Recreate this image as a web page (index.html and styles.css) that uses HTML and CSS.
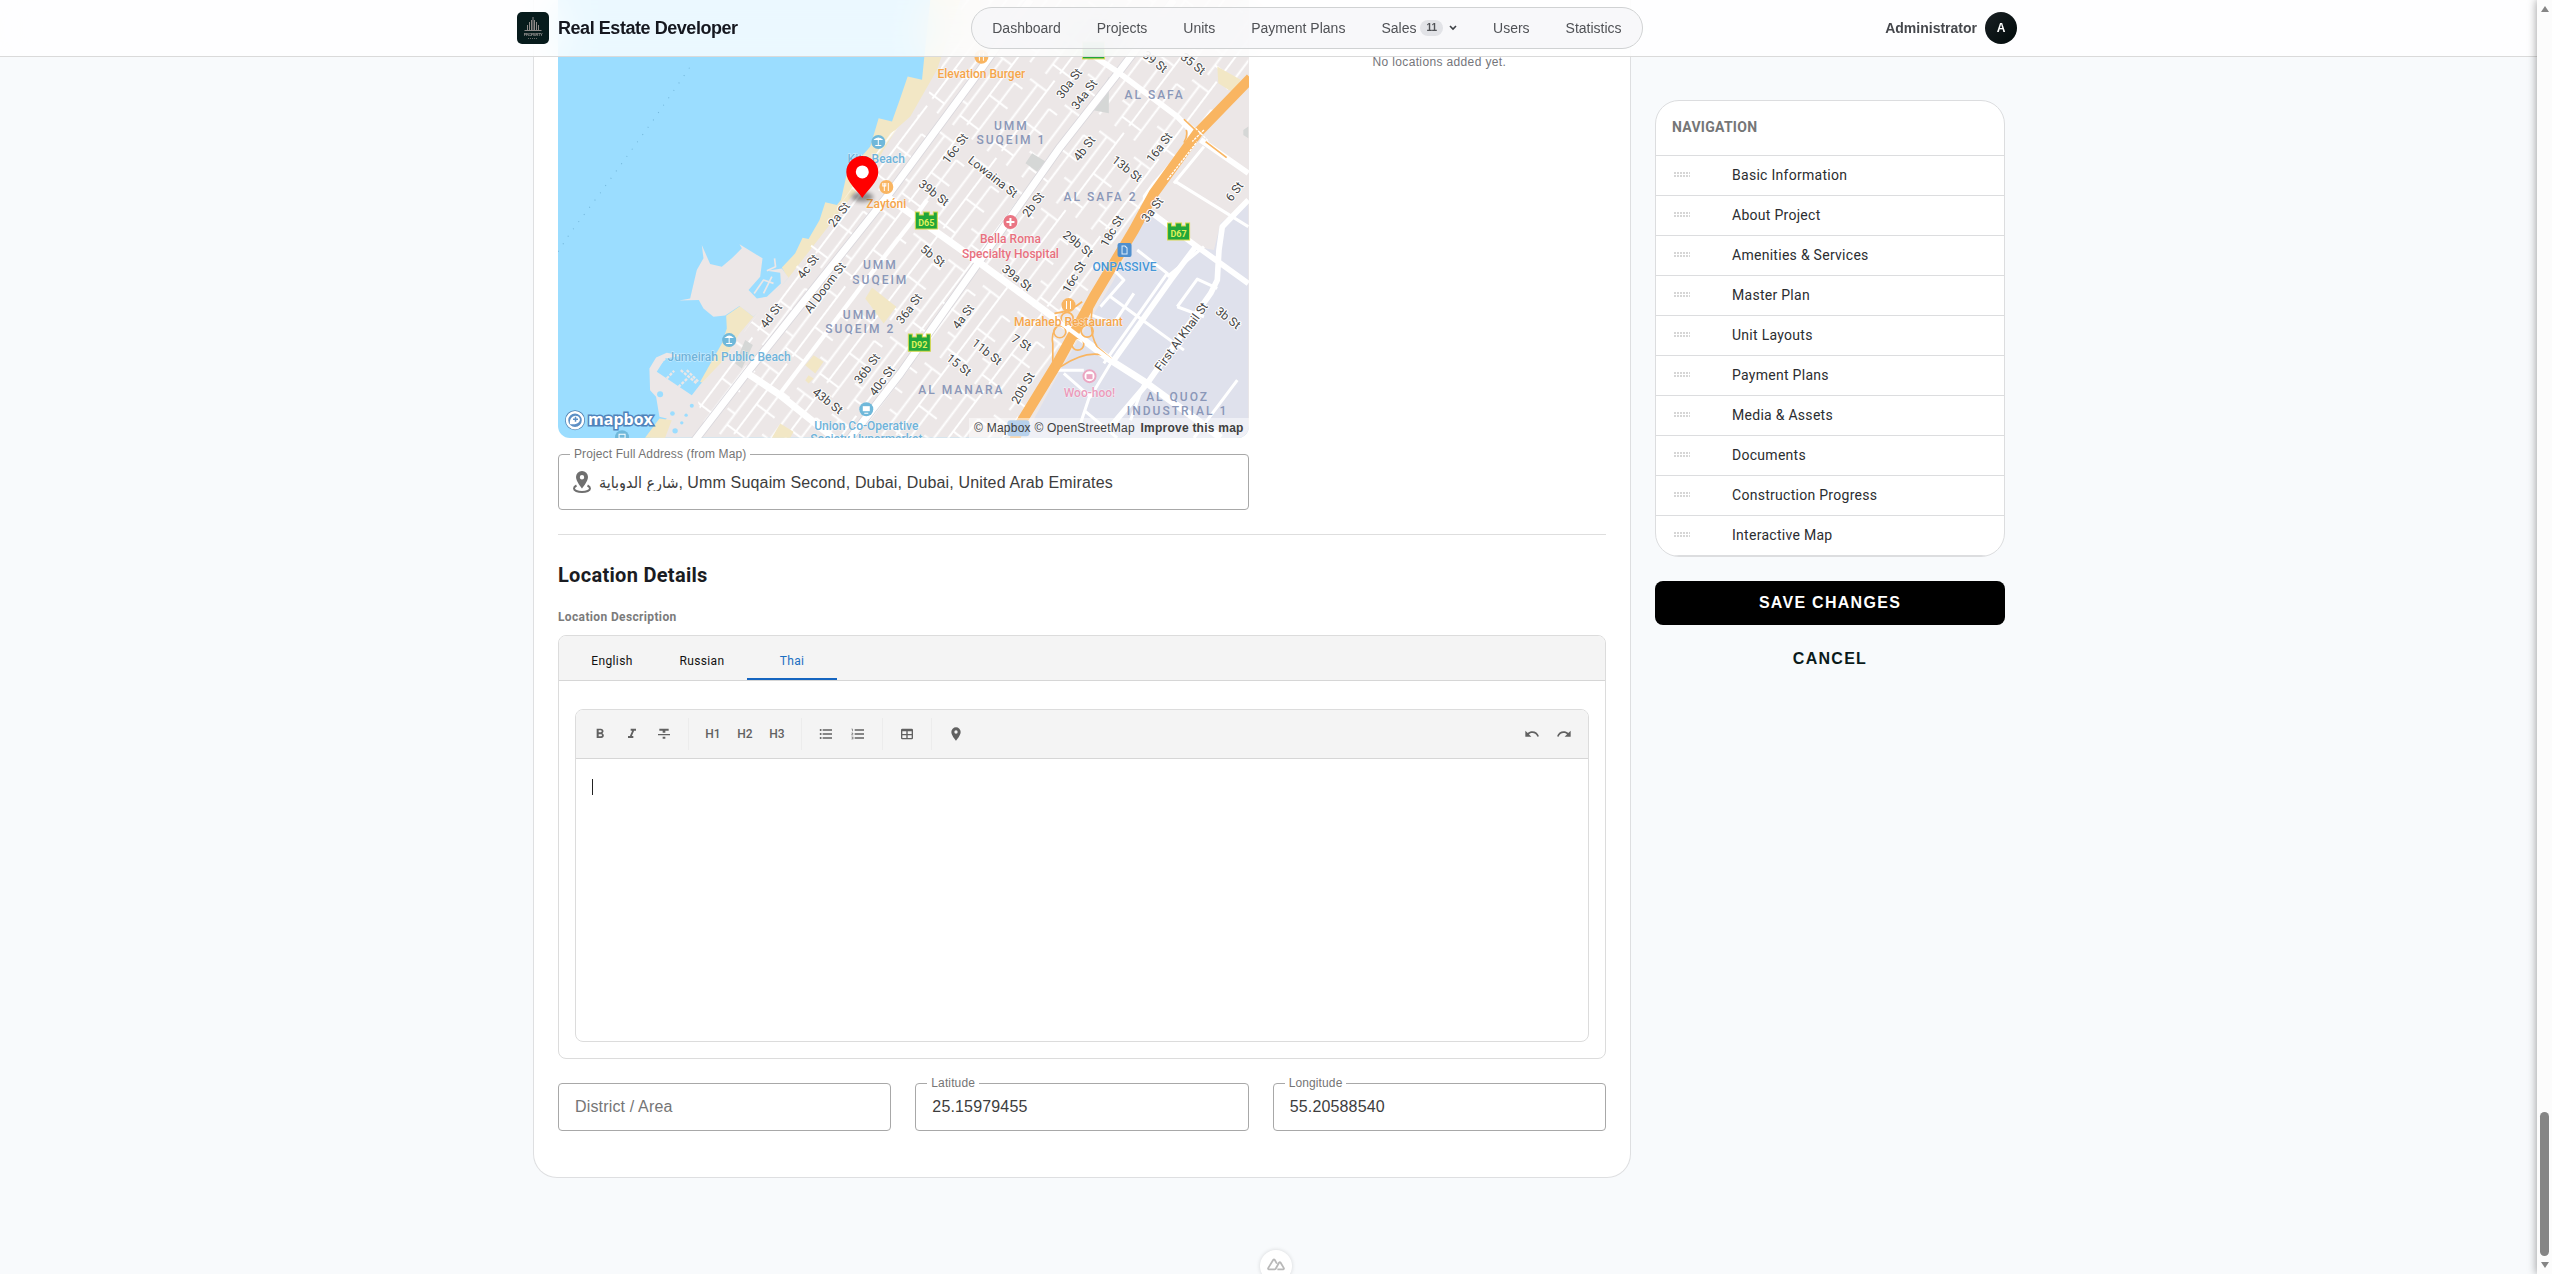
FILE: index.html
```html
<!DOCTYPE html>
<html lang="en">
<head>
<meta charset="utf-8">
<meta name="viewport" content="width=device-width, initial-scale=1">
<title>Real Estate Developer</title>
<link rel="stylesheet" href="styles.css">
</head>
<body>
<header class="topbar">
  <div class="topbar-inner">
    <a class="brand" href="#">
      <svg class="brand-logo" viewBox="0 0 32 32" aria-hidden="true">
        <rect width="32" height="32" rx="5" fill="#071b1c"/>
        <g stroke="#8d8988" fill="none"><path d="M16 5v13M14.500 8v10M17.500 8v10M12.500 10v8M19.500 10v8M10.500 13v5M21.500 13v5" stroke-width="1"/><path d="M7.500 18.500h17"/></g>
        <text x="16" y="24" font-size="4" text-anchor="middle" fill="#9b9796" class="logo-text">PROPERTY</text>
        <path d="M11 26.500h10" stroke="#6c6a6a" stroke-dasharray="1 1"/>
      </svg>
      <span>Real Estate Developer</span>
    </a>
    <nav class="pill" aria-label="Main">
      <a href="#">Dashboard</a>
      <a href="#">Projects</a>
      <a href="#">Units</a>
      <a href="#">Payment Plans</a>
      <a href="#">Sales <span class="badge">11</span><svg class="chevron" viewBox="0 0 8 6" aria-hidden="true"><path d="M1 1l3 3 3-3" fill="none" stroke="#3c3f44" stroke-width="1.600"/></svg></a>
      <a href="#">Users</a>
      <a href="#">Statistics</a>
    </nav>
    <button class="account" type="button"><span>Administrator</span><span class="avatar">A</span></button>
  </div>
</header>

<main class="page">
  <section class="card">
    <div class="grid">
      <div class="map-col">
        <div class="map">
          <svg class="map-art" viewBox="0 0 690 438" preserveAspectRatio="xMidYMid slice" role="img" aria-label="Map of Umm Suqeim, Dubai">
            <defs>
              <pattern id="blocks" width="290" height="130" patternUnits="userSpaceOnUse" patternTransform="translate(1010 440) rotate(-53)">
                <path d="M0 28H250M26 62H290M0 100H212M36 28V100M250 0V62M138 62V130M212 100V130M76 0V28" fill="none" stroke="#fff" stroke-width="6"/>
              </pattern>
              <filter id="soft" x="-50%" y="-50%" width="200%" height="200%"><feGaussianBlur stdDeviation="2"/></filter>
            </defs>
            <rect width="690" height="438" fill="#9bddff"/>
            <g transform="translate(-8 50) scale(.33333)" stroke-linejoin="round">
              <path fill="#f2e7c5" d="M1140-150 1122 20 1115 90 1072 80 1048 150 1025 215 985 205 960 290 890 370 872 450 860 465 825 457 808 510 775 567 757 563 735 610 695 652 715 690 610 800 570 768 528 797 530 835 515 880 450 995 480 1010 800 640 1300 0 1400-150z"/>
              <path fill="#ece7e7" d="M1230-150 1160 60 1080 200 1040 235 1000 300 940 400 900 445 715 683 640 760 610 800 568 850 520 930 450 1003 425 1035 320 965 345 925 395 917 350 908 318 922 298 955 300 1020 318 1040 328 1100 350 1105 300 1163H2100V-150z"/>
              <path fill="#ece7e7" d="M455 585 460 625 440 660 420 745 387 751 446 750 460 775 490 800 525 796 568 768 610 800 715 683 695 655 650 662 690 668 692 700 650 740 620 745 595 720 630 680 637 625 568 583 575 595 545 625 515 650 480 642z"/>
              <path d="M673 625 676 650 650 662M612 730 640 690 670 700M640 730 665 680" fill="none" stroke="#ece7e7" stroke-width="5"/>
              <path d="M320 950 345 925M350 985 372 962M385 1010 412 985M392 960 440 1000M410 960 445 995" fill="none" stroke="#ece7e7" stroke-width="7" stroke-dasharray="9 4"/>
              <path d="M24 605 60 550 150 430 310 210 400 80 430 36" stroke="#72b5d9" stroke-width="3" stroke-dasharray="3 24" fill="none"/>
              <path fill="url(#blocks)" d="M1230-150 1170 60 1100 200 1020 250 715 683 600 820 440 1040 470 1163H1400L1540 940 1700 640 1800 440 1950 250 2093 90V-150z"/>
              <path fill="#f2e7c5" d="M328 1105 365 1110 345 1163H285zM965 712 1038 770 1000 820 945 745zM790 915 820 935 795 970 765 945zM690 1120 730 1145 720 1163H665zM775 975 790 985 775 1000 765 990zM2000 50 2070 90 2050 130 2003 100z"/>
              <path fill="#ece7e7" d="M1815 430 1960 290 2093 380V500L1990 600 1940 590z"/>
              <path fill="#dfe1ec" d="M1795 480 1940 590 1990 600 2010 520 2093 450V1163H1420L1530 960 1690 690z"/>
              <path fill="none" stroke="#fff" stroke-width="9" d="M1680 740 1790 820 1900 900M1760 600 1850 670 1660 940M1680 650 1720 690 1650 770M1870 400 1960 290M1875 395 2093 530M1850 680 1960 590M1750 730 1690 820 1610 790M1770 820 1700 910M1600 960 1520 960M1540 970 1620 1040 1680 940M1600 1080 1700 1163M1620 1030 1590 1120M1740 1110 1780 1000M2060 990 1930 1163M1880 770 1940 687 2000 715M1880 770 1960 800"/>
              <path fill="#d5d7d6" d="M1675 80V190L1625 180zM1445 310 1485 335 1460 365 1425 340zM585 870 608 885 575 955 555 940zM2078 240 2093 230V265L2078 255z"/>
              <g fill="#9bddff"><circle cx="330" cy="1032" r="9"/><circle cx="367" cy="1090" r="7"/><circle cx="395" cy="1118" r="5"/><circle cx="375" cy="1142" r="8"/><circle cx="425" cy="1067" r="6"/><circle cx="408" cy="1095" r="5"/></g>
              <path fill="none" stroke="#d9d7dc" stroke-width="26" d="M430 1176 590 968 1010 440 1290 60 1440-150M890 1176 1050 970 1290 630 1530 290 1710 60 1870-150"/>
              <g fill="none" stroke="#fff">
                <path stroke-width="21" d="M430 1176 590 968 1010 440 1290 60 1440-150M890 1176 1050 970 1290 630 1530 290 1710 60 1870-150M590 968 690 1035 850 1163M1010 440 1080 490 1290 640 1480 780 1680 930 1790 1000 1940 1110 2010 1163"/>
                <path stroke-width="17" d="M1540-40 1700 65 1880 200 1920 240 1920 280 1815 400 1785 440 1792 480 1940 590 2093 700M1950 270 2093 370M2093 450 2015 530 2005 600 2000 690 1980 730 1790 1000 1680 1130M1935 590 1860 690 1690 930"/>
                <path stroke-width="13" d="M690 1030 940 700 1080 520 1130 450"/>
              </g>
              <g fill="none" stroke="#f9b561">
                <path d="M2100 85 1940 250 1810 430 1750 540 1630 740 1520 940 1410 1120 1390 1176" stroke-width="31"/>
                <path stroke-width="5" d="M1900 208 1950 255M1965 275 2028 323M1907 240Q1912 260 1900 278M1507 970V880Q1500 845 1528 820M1512 790Q1560 785 1595 755M1625 775Q1615 850 1640 890L1680 925Q1620 890 1530 950"/>
                <circle cx="1528" cy="845" r="18" stroke-width="5"/><circle cx="1610" cy="843" r="18" stroke-width="5"/><circle cx="1582" cy="882" r="18" stroke-width="5"/><circle cx="1550" cy="805" r="18" stroke-width="5"/>
              </g>
              <path d="M1480 780 1680 930" stroke="#fff" stroke-width="13"/>
              <path d="M1850 390 1940 275M1935 235 1975 275M1960 240 1925 275" stroke="#fff" stroke-width="4" stroke-dasharray="8 3"/>
            </g>

            <g class="m-poi">
              <g fill="#6fb8da"><circle cx="320" cy="142" r="7"/><circle cx="171" cy="340" r="7"/><circle cx="308" cy="409" r="7"/><circle cx="64" cy="437" r="7"/></g>
              <g fill="#f9b561"><circle cx="328" cy="187" r="7"/><circle cx="423" cy="57" r="7"/><circle cx="510" cy="305" r="7"/></g>
              <circle cx="452" cy="222" r="7" fill="#ea7583"/><path d="M452 218v8M448 222h8" stroke="#fff" stroke-width="2"/>
              <circle cx="531" cy="376" r="6" fill="#fff" stroke="#eba6c2" stroke-width="2"/><rect x="528" y="374" width="6" height="5" fill="#eba6c2"/>
              <rect x="559" y="243" width="14" height="14" rx="2" fill="#4f8fce"/><path d="M563.500 254v-8h3l2 2v6z" fill="none" stroke="#dcecf9"/>
              <path d="M316.500 139.500q3.500-3 7 0zM320 139v6M317 145.500h6M167.500 337.500q3.500-3 7 0zM171 337v6M168 343.500h6" stroke="#fff" fill="#fff"/>
              <rect x="304.500" y="406" width="7" height="5" fill="#fff"/><path d="M306 413h4M61 434h6v4h-6z" stroke="#fff" fill="none"/>
              <path d="M326 183v8M330 183v8M324.500 183v3h3v-3M421 53v8M425 53v8M508 301v8M512 301v8" stroke="#fff" fill="none"/>
              <rect x="449" y="420" width="22" height="16" rx="3" fill="#6fa3d8"/>
            </g>

            <g class="m-shield">
              <g fill="#21a63b" stroke="#d7d84c"><path d="M357 212h4v3h4v-3h6v3h4v-3h4v17h-22zM609 223h4v3h4v-3h6v3h4v-3h4v17h-22zM350 334h4v3h4v-3h6v3h4v-3h4v17h-22z"/><rect x="524" y="42" width="22" height="17"/></g>
              <text x="368" y="226">D65</text><text x="620" y="237">D67</text><text x="361" y="348">D92</text>
            </g>

            <g class="m-area">
              <text x="453" y="130">UMM</text><text x="453" y="144">SUQEIM 1</text>
              <text x="596" y="99">AL SAFA</text><text x="542" y="201">AL SAFA 2</text>
              <text x="322" y="269">UMM</text><text x="322" y="284">SUQEIM</text>
              <text x="302" y="319">UMM</text><text x="302" y="333">SUQEIM 2</text>
              <text x="403" y="394">AL MANARA</text><text x="619" y="401">AL QUOZ</text><text x="619" y="415">INDUSTRIAL 1</text>
            </g>
            <g class="m-label">
              <g fill="#6fb3da"><text x="318" y="163">Kite Beach</text><text x="171" y="361">Jumeirah Public Beach</text><text x="308" y="430">Union Co-Operative</text><text x="308" y="443">Society Hypermarket</text></g>
              <g fill="#f5a54a"><text x="328" y="208">Zaytóni</text><text x="423" y="78">Elevation Burger</text><text x="510" y="326">Maraheb Restaurant</text></g>
              <g fill="#e8707e"><text x="452" y="243">Bella Roma</text><text x="452" y="258">Specialty Hospital</text></g>
              <text x="566" y="271" fill="#4797d8">ONPASSIVE</text><text x="531" y="397" fill="#eb9bbb">Woo-hoo!</text>
            </g>
            <g class="m-street">
              <text transform="translate(284 217) rotate(-53)">2a St</text>
              <text transform="translate(253 269) rotate(-53)">4c St</text>
              <text transform="translate(270 290) rotate(-53)">Al Doom St</text>
              <text transform="translate(216 318) rotate(-53)">4d St</text>
              <text transform="translate(312 371) rotate(-53)">36b St</text>
              <text transform="translate(327 383) rotate(-53)">40c St</text>
              <text transform="translate(354 311) rotate(-53)">36a St</text>
              <text transform="translate(514 86) rotate(-53)">30a St</text>
              <text transform="translate(529 97) rotate(-53)">34a St</text>
              <text transform="translate(400 151) rotate(-53)">16c St</text>
              <text transform="translate(478 207) rotate(-53)">2b St</text>
              <text transform="translate(529 151) rotate(-53)">4b St</text>
              <text transform="translate(604 150) rotate(-53)">16a St</text>
              <text transform="translate(557 233) rotate(-60)">18c St</text>
              <text transform="translate(597 212) rotate(-53)">3a St</text>
              <text transform="translate(679 194) rotate(-53)">6 St</text>
              <text transform="translate(519 279) rotate(-60)">16c St</text>
              <text transform="translate(408 319) rotate(-53)">4a St</text>
              <text transform="translate(468 390) rotate(-60)">20b St</text>
              <text transform="translate(626 339) rotate(-54)">First Al Khail St</text>
              <text transform="translate(267 404) rotate(38)">43b St</text>
              <text transform="translate(432 180) rotate(38)">Lowaina St</text>
              <text transform="translate(373 196) rotate(38)">39b St</text>
              <text transform="translate(372 259) rotate(38)">5b St</text>
              <text transform="translate(566 172) rotate(38)">13b St</text>
              <text transform="translate(632 67) rotate(38)">35 St</text>
              <text transform="translate(594 65) rotate(38)">39 St</text>
              <text transform="translate(517 247) rotate(38)">29b St</text>
              <text transform="translate(456 281) rotate(38)">39a St</text>
              <text transform="translate(461 346) rotate(30)">7 St</text>
              <text transform="translate(426 355) rotate(38)">11b St</text>
              <text transform="translate(398 368) rotate(38)">15 St</text>
              <text transform="translate(667 321) rotate(38)">3b St</text>
            </g>
            <ellipse cx="304" cy="197" rx="11" ry="5" fill="#000" opacity=".4" filter="url(#soft)"/>
            <path d="M304 198c-5-8-16-16-16-26a16 16 0 0 1 32 0c0 10-11 18-16 26z" fill="#f00"/><circle cx="304" cy="172" r="6.500" fill="#fff"/>
            <g>
              <circle cx="17" cy="420" r="9" fill="#5d8fc4" stroke="#4f7fae" stroke-width="2"/><circle cx="17" cy="420" r="8" fill="none" stroke="#fff" stroke-width="2.500"/>
              <path d="M12 424c-1-6 3-10 8-8 4 3 2 9-8 8z" fill="#fff"/><path d="M17.500 416.500v5M15 419h5" stroke="#5d8fc4" stroke-width="1.500"/>
              <text class="m-brand" x="30" y="425">mapbox</text>
            </g>
          </svg>
          <div class="attribution"><a href="#">© Mapbox</a> <a href="#">© OpenStreetMap</a> <a class="strong" href="#">Improve this map</a></div>
        </div>
        <div class="field field-tall">
          <svg class="field-icon" viewBox="0 0 18 22" aria-hidden="true"><path fill-rule="evenodd" d="M9 0a6 6 0 0 1 6 6c0 4.500-6 11.500-6 11.500S3 10.500 3 6a6 6 0 0 1 6-6zm0 4a2.200 2.200 0 1 0 0 4.400A2.200 2.200 0 0 0 9 4z" fill="#6f6f6f"/><path d="M3.500 14.500C1.500 15.500 1 16.500 1 17.500 1 19.500 4.500 21 9 21s8-1.500 8-3.500c0-1-.5-2-2.500-3" fill="none" stroke="#6f6f6f" stroke-width="2"/></svg>
          <input id="address" type="text" value="شارع الدوباية, Umm Suqaim Second, Dubai, Dubai, United Arab Emirates">
          <label for="address">Project Full Address (from Map)</label>
        </div>
      </div>
      <p class="empty">No locations added yet.</p>
    </div>

    <hr class="divider">
    <h2 class="section-title">Location Details</h2>
    <h3 class="sub-title">Location Description</h3>

    <div class="tabs-box">
      <div class="tabs" role="tablist">
        <button type="button" role="tab">English</button>
        <button type="button" role="tab">Russian</button>
        <button type="button" role="tab" aria-selected="true" class="active">Thai</button>
      </div>
      <div class="tab-panel">
        <div class="editor">
          <div class="toolbar" role="toolbar" aria-label="Formatting">
            <button type="button" aria-label="Bold"><svg viewBox="0 0 24 24"><path d="M13.500,15.500H10V12.500H13.500A1.500,1.500 0 0,1 15,14A1.500,1.500 0 0,1 13.500,15.500M10,6.500H13A1.500,1.500 0 0,1 14.500,8A1.500,1.500 0 0,1 13,9.500H10M15.600,10.790C16.570,10.110 17.250,9 17.250,8C17.250,5.740 15.500,4 13.250,4H7V18H14.040C16.140,18 17.750,16.300 17.750,14.210C17.750,12.690 16.890,11.390 15.600,10.790Z"/></svg></button>
            <button type="button" aria-label="Italic"><svg viewBox="0 0 24 24"><path d="M10,4V7H12.210L8.790,15H6V18H14V15H11.790L15.210,7H18V4H10Z"/></svg></button>
            <button type="button" aria-label="Strikethrough"><svg viewBox="0 0 24 24"><path d="M3,14H21V12H3M5,4V7H10V10H14V7H19V4M10,19H14V16H10V19Z"/></svg></button>
            <span class="sep"></span>
            <button type="button">H1</button>
            <button type="button">H2</button>
            <button type="button">H3</button>
            <span class="sep"></span>
            <button type="button" aria-label="Bulleted list"><svg viewBox="0 0 24 24"><path d="M7,5H21V7H7V5M7,13V11H21V13H7M4,4.500A1.500,1.500 0 0,1 5.500,6A1.500,1.500 0 0,1 4,7.500A1.500,1.500 0 0,1 2.500,6A1.500,1.500 0 0,1 4,4.500M4,10.500A1.500,1.500 0 0,1 5.500,12A1.500,1.500 0 0,1 4,13.500A1.500,1.500 0 0,1 2.500,12A1.500,1.500 0 0,1 4,10.500M7,19V17H21V19H7M4,16.500A1.500,1.500 0 0,1 5.500,18A1.500,1.500 0 0,1 4,19.500A1.500,1.500 0 0,1 2.500,18A1.500,1.500 0 0,1 4,16.500Z"/></svg></button>
            <button type="button" aria-label="Numbered list"><svg viewBox="0 0 24 24"><path d="M7,13V11H21V13H7M7,19V17H21V19H7M7,7V5H21V7H7M3,8V5H2V4H4V8H3M2,17V16H5V20H2V19H4V18.500H3V17.500H4V17H2M4.250,10A0.750,0.750 0 0,1 5,10.750C5,10.950 4.920,11.140 4.790,11.270L3.120,13H5V14H2V13.080L4,11H2V10H4.250Z"/></svg></button>
            <span class="sep"></span>
            <button type="button" aria-label="Insert table"><svg viewBox="0 0 24 24"><path d="M5,4H19A2,2 0 0,1 21,6V18A2,2 0 0,1 19,20H5A2,2 0 0,1 3,18V6A2,2 0 0,1 5,4M5,8V12H11V8H5M13,8V12H19V8H13M5,14V18H11V14H5M13,14V18H19V14H13Z"/></svg></button>
            <span class="sep"></span>
            <button type="button" aria-label="Insert location"><svg viewBox="0 0 24 24"><path d="M12,11.500A2.500,2.500 0 0,1 9.500,9A2.500,2.500 0 0,1 12,6.500A2.500,2.500 0 0,1 14.500,9A2.500,2.500 0 0,1 12,11.500M12,2A7,7 0 0,0 5,9C5,14.250 12,22 12,22C12,22 19,14.250 19,9A7,7 0 0,0 12,2Z"/></svg></button>
            <span class="grow"></span>
            <button type="button" aria-label="Undo"><svg viewBox="0 0 24 24"><path d="M12.500,8C9.850,8 7.450,9 5.600,10.600L2,7V16H11L7.380,12.380C8.770,11.220 10.540,10.500 12.500,10.500C16.040,10.500 19.050,12.810 20.100,16L22.470,15.220C21.080,11.030 17.150,8 12.500,8Z"/></svg></button>
            <button type="button" aria-label="Redo"><svg viewBox="0 0 24 24"><path d="M18.400,10.600C16.550,9 14.150,8 11.500,8C6.850,8 2.920,11.030 1.540,15.220L3.900,16C4.950,12.810 7.950,10.500 11.500,10.500C13.450,10.500 15.230,11.220 16.620,12.380L13,16H22V7L18.400,10.600Z"/></svg></button>
          </div>
          <div class="editor-body" contenteditable="true" role="textbox" aria-label="Location description" aria-multiline="true"></div>
        </div>
      </div>
    </div>

    <div class="grid fields">
      <div class="field"><input id="district" type="text" placeholder="District / Area" aria-label="District / Area"></div>
      <div class="field"><input id="lat" type="text" value="25.15979455"><label for="lat">Latitude</label></div>
      <div class="field"><input id="lng" type="text" value="55.20588540"><label for="lng">Longitude</label></div>
    </div>
  </section>

  <aside class="side">
    <nav class="side-nav" aria-label="Sections">
      <h2>NAVIGATION</h2>
      <a href="#"><i class="grip"></i>Basic Information</a>
      <a href="#"><i class="grip"></i>About Project</a>
      <a href="#"><i class="grip"></i>Amenities &amp; Services</a>
      <a href="#"><i class="grip"></i>Master Plan</a>
      <a href="#"><i class="grip"></i>Unit Layouts</a>
      <a href="#"><i class="grip"></i>Payment Plans</a>
      <a href="#"><i class="grip"></i>Media &amp; Assets</a>
      <a href="#"><i class="grip"></i>Documents</a>
      <a href="#"><i class="grip"></i>Construction Progress</a>
      <a href="#"><i class="grip"></i>Interactive Map</a>
    </nav>
    <button class="btn btn-primary" type="button">SAVE CHANGES</button>
    <button class="btn btn-text" type="button">CANCEL</button>
  </aside>
</main>

<button class="devtools" type="button" aria-label="Developer tools"><svg viewBox="0 0 20 14"><path d="M11.500 12.500H18q1.200-.3.700-1.500L15 4.800q-.7-1-1.500 0L9.500 12q-.4.500-1 .5H2q-1.200-.3-.7-1.500L7 1.700q.8-1 1.500 0L11 6" fill="none" stroke="#b9b9b9" stroke-width="2" stroke-linejoin="round"/></svg></button>
<div class="scrollbar" aria-hidden="true">
  <svg viewBox="0 0 8 6"><path d="M0 6 4 0l4 6z"/></svg>
  <span class="thumb"></span>
  <svg viewBox="0 0 8 6"><path d="M0 0h8L4 6z"/></svg>
</div>
</body>
</html>
```
FILE: styles.css
```css
* { box-sizing: border-box; }
html { overflow: hidden; }
body {
  margin: 0;
  padding-right: 14px;
  min-height: 100vh;
  background: #f8fafc;
  color: #1a1c20;
  font-family: "Liberation Sans", Arial, sans-serif;
  font-size: 14px;
}
a { color: inherit; text-decoration: none; }
button { font: inherit; color: inherit; border: 0; background: none; padding: 0; }
h2, h3, p { margin: 0; }

/* Top bar */
.topbar {
  position: fixed;
  top: 0; left: 0; right: 0;
  z-index: 5;
  height: 57px;
  padding-right: 18px;
  border-bottom: 1px solid #dadada;
  background: rgba(255, 255, 255, .8);
  backdrop-filter: blur(20px);
}
.topbar-inner {
  max-width: 1500px;
  height: 56px;
  margin: 0 auto;
  display: flex;
  align-items: center;
  justify-content: space-between;
}
.brand { display: flex; align-items: center; gap: 9px; font-size: 18px; font-weight: 700; letter-spacing: -.025em; color: #15171f; }
.brand-logo { width: 32px; height: 32px; }
.logo-text { font-family: "Liberation Sans", sans-serif; }
.pill {
  display: flex;
  gap: 4px;
  height: 42px;
  padding: 0 4px;
  border: 1px solid #d0d2d3;
  border-radius: 21px;
  background: rgba(244, 244, 246, .6);
  color: #505256;
}
.pill a { display: flex; align-items: center; padding: 0 16px; }
.badge {
  margin: 0 6px 0 4px;
  padding: 0 6px;
  border-radius: 8px;
  background: #e2e3e7;
  font-size: 10px;
  line-height: 16px;
  font-weight: 700;
}
.chevron { width: 8px; height: 6px; }
.account { display: flex; align-items: center; gap: 8px; padding-left: 9px; font-weight: 700; color: #46484d; }
.avatar {
  width: 32px; height: 32px;
  border-radius: 50%;
  background: linear-gradient(135deg, #1a2024, #000a0a);
  color: #fff;
  font-size: 12px;
  line-height: 32px;
  text-align: center;
}

/* Page grid */
.page {
  max-width: 1472px;
  margin: 0 auto;
  display: grid;
  grid-template-columns: minmax(0, 1fr) 350px;
  gap: 24px;
  align-items: start;
}
.card {
  padding: 0 24px 46px;
  border: 1px solid #dedfe1;
  border-top: 0;
  border-radius: 0 0 24px 24px;
  background: #fff;
}
.grid { display: grid; grid-template-columns: repeat(3, minmax(0, 1fr)); gap: 24px; }
.map-col { grid-column: span 2; }
.empty { padding-top: 53px; text-align: center; font-size: 12px; line-height: 18px; letter-spacing: .03em; color: #74757a; }

/* Map */
.map { position: relative; height: 438px; overflow: hidden; border-radius: 0 0 12px 12px; }
.map-art { display: block; width: 100%; height: 100%; }
.map-art text { text-anchor: middle; }
.m-area { font: 500 12px Roboto, sans-serif; letter-spacing: 2px; fill: #8a97b8; }
.m-label { font: 500 12px Roboto, sans-serif; stroke: #fff; stroke-width: 1px; stroke-opacity: .6; paint-order: stroke; }
.m-street { font: 400 12px Roboto, sans-serif; fill: #444; stroke: #fff; stroke-width: 2px; paint-order: stroke; }
.m-shield text { font: 700 9px Roboto, sans-serif; fill: #dff05a; }
.map-art .m-brand { font: 700 16px "Open Sans", sans-serif; text-anchor: start; fill: #fff; stroke: #4f83bb; stroke-width: 3px; paint-order: stroke; }
.attribution {
  position: absolute;
  right: 0; bottom: 0;
  padding: 0 5px;
  background: rgba(255, 255, 255, .5);
  font-size: 12px;
  line-height: 20px;
  letter-spacing: .02em;
  color: #404040;
}
.strong { margin-left: 2px; font-weight: 700; }

/* Outlined fields */
.field {
  position: relative;
  display: flex;
  align-items: center;
  gap: 8px;
  height: 48px;
  padding: 0 16px;
  border: 1px solid #a8a8a8;
  border-radius: 4px;
}
.field-tall { height: 56px; margin-top: 16px; padding: 0 14px; }
.field-icon { width: 18px; height: 22px; flex: none; }
.field input {
  flex: 1;
  min-width: 0;
  padding: 0;
  border: 0;
  outline: 0;
  background: none;
  font: 16px "Liberation Sans", "DejaVu Sans Condensed", "DejaVu Sans", sans-serif;
  letter-spacing: .01em;
  color: #3d3d3d;
}
.field input::placeholder { color: #757575; opacity: 1; }
.field label {
  position: absolute;
  top: -9px; left: 11px;
  padding: 0 4px;
  background: #fff;
  font-size: 12px;
  line-height: 16px;
  letter-spacing: .01em;
  color: #757575;
}
.fields { margin-top: 24px; }

/* Location details */
.divider { height: 1px; margin: 24px 0 26px; border: 0; background: #dedede; }
.section-title { font: 700 20px/28px Roboto, sans-serif; letter-spacing: .015em; color: #1a1c22; }
.sub-title { margin: 20px 0 10px; font: 700 12px/16px Roboto, sans-serif; letter-spacing: .03em; color: #7b7b7b; }
.tabs-box { border: 1px solid #dcdcdc; border-radius: 8px; overflow: hidden; }
.tabs { display: flex; height: 45px; padding-left: 8px; border-bottom: 1px solid #d6d6d6; background: #f4f4f4; }
.tabs button { width: 90px; padding-top: 8px; border-bottom: 2px solid transparent; font: 400 12px/16px Roboto, sans-serif; letter-spacing: .03em; color: #111; }
.tabs .active { border-color: #1565c0; color: #1b6fc2; }
.tab-panel { padding: 28px 16px 16px; }
.editor { border: 1px solid #dcdcdc; border-radius: 8px; overflow: hidden; }
.toolbar { display: flex; align-items: center; height: 49px; padding: 0 8px; border-bottom: 1px solid #d6d6d6; background: #f4f4f4; color: #616161; }
.toolbar button { display: grid; place-items: center; width: 32px; height: 32px; font: 500 12px/16px Roboto, sans-serif; }
.toolbar svg { width: 16px; height: 16px; fill: currentColor; }
.sep { width: 1px; height: 32px; margin: 0 8px; background: #ececec; }
.grow { flex: 1; }
.editor-body { min-height: 282px; padding: 20px 16px; outline: 0; }
.editor-body::before { content: ""; display: block; width: 1px; height: 16px; background: #222; }

/* Sidebar */
.side { position: sticky; top: 100px; margin-top: 100px; display: grid; }
.side-nav { border: 1px solid #dcdddf; border-radius: 24px; background: #fff; overflow: hidden; font: 400 14px/20px Roboto, sans-serif; letter-spacing: .02em; color: #2b2d30; }
.side-nav h2 { padding: 16px 16px 18px; font: 700 14px/20px Roboto, sans-serif; color: #757677; border-bottom: 1px solid #dcdddf; }
.side-nav a { display: flex; align-items: center; gap: 42px; height: 40px; padding: 0 0 2px 18px; border-bottom: 1px solid #dcdddf; }
.grip {
  width: 16px; height: 5px;
  background:
    repeating-linear-gradient(90deg, #d6d6d6 0 2px, transparent 2px 3px) 0 0 / 100% 2px no-repeat,
    repeating-linear-gradient(90deg, #d6d6d6 0 2px, transparent 2px 3px) 0 3px / 100% 2px no-repeat;
}
.btn { height: 44px; border-radius: 8px; font-size: 16px; font-weight: 700; letter-spacing: .08em; }
.btn-primary { margin-top: 24px; background: #000; color: #fff; }
.btn-text { margin-top: 12px; color: #0b1a1a; }

/* Floating pieces */
.devtools {
  position: fixed;
  left: 50%; bottom: -8px;
  width: 32px; height: 32px;
  margin-left: -16px;
  border-radius: 50%;
  background: #fff;
  box-shadow: 0 0 4px rgba(0, 0, 0, .15);
}
.devtools svg { width: 18px; height: 13px; }
.scrollbar {
  position: fixed;
  top: 0; right: 0; bottom: 0;
  z-index: 6;
  width: 15px;
  padding: 6px 3px;
  display: flex;
  flex-direction: column;
  align-items: center;
  background: #fcfcfc;
  box-shadow: -1px 0 8px rgba(0, 0, 0, .35);
}
.scrollbar svg { width: 8px; height: 6px; fill: #858585; }
.thumb { width: 9px; height: 144px; margin: auto 0 6px; border-radius: 5px; background: #858585; }
```
